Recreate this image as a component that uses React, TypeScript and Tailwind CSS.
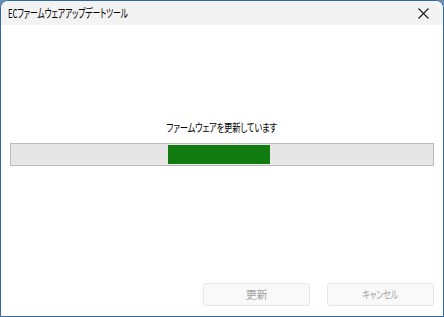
import React from "react";

const App = () => {
  return (
    <div className="w-[444px] h-[317px] bg-[#6b8fb0] font-['Noto_Sans_CJK_JP','Noto_Sans',sans-serif] [font-feature-settings:'palt']">
      <div className="w-full h-full flex flex-col border border-[#2f6aa0] rounded-t-[8px] overflow-hidden bg-white">
        {/* title bar */}
        <div className="h-[24px] bg-[#f3f3f3] flex items-center justify-between pl-[7px] pr-[14px] shrink-0">
          <span className="inline-block origin-left scale-x-[0.66] text-[12px] text-black tracking-[-0.3px] leading-none whitespace-nowrap">
            ECファームウェアアップデートツール
          </span>
          <svg width="11" height="11" viewBox="0 0 11 11">
            <path d="M0.5 0.5 L10.5 10.5 M10.5 0.5 L0.5 10.5" stroke="#1a1a1a" strokeWidth="1.1" />
          </svg>
        </div>

        <div className="flex-1 flex flex-col px-[9px]">
          <div className="pt-[93px] text-center leading-[14px]">
            <span className="inline-block scale-x-[0.76] text-[11px] text-black tracking-[-0.3px] whitespace-nowrap">
              ファームウェアを更新しています
            </span>
          </div>
          <div className="mt-[9px] h-[23px] border border-[#bcbcbc] bg-[#e6e6e6] flex items-center">
            <div className="ml-[157px] w-[102px] h-[19px] bg-[#107c10]" />
          </div>

          <div className="mt-auto mb-[10px] flex justify-end gap-[17px]">
            <button className="w-[107px] h-[23px] rounded-[3px] border border-[#e6e6e6] bg-[#f9f9f9] text-[11px] text-[#a3a3a3] tracking-[-0.3px]">
              更新
            </button>
            <button className="w-[107px] h-[23px] rounded-[3px] border border-[#e6e6e6] bg-[#f9f9f9] text-[11px] text-[#a3a3a3] tracking-[-0.3px]">
              <span className="inline-block scale-x-[0.74] whitespace-nowrap">キャンセル</span>
            </button>
          </div>
        </div>
      </div>
    </div>
  );
};

export default App;
